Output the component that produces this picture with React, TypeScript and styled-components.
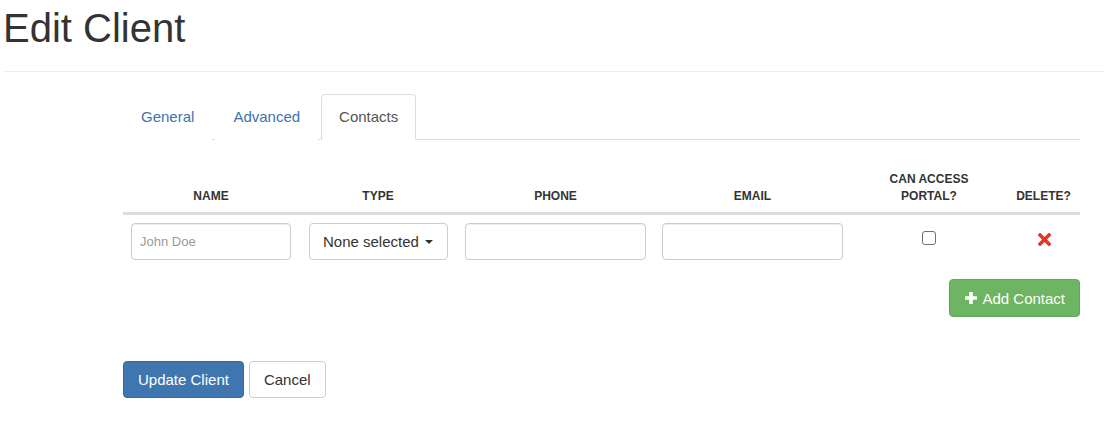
import React from "react";
import styled, { createGlobalStyle } from "styled-components";

const GlobalStyle = createGlobalStyle`
  html, body { margin: 0; padding: 0; background: #fff; }
  body {
    font-family: "Liberation Sans", Arial, Helvetica, sans-serif;
    font-size: 15px;
    color: #333;
  }
  * { box-sizing: border-box; }
`;

const Page = styled.div`
  width: 1104px;
  padding-top: 6px;
`;

const Title = styled.h1`
  margin: 0 0 0 3px;
  font-size: 40px;
  line-height: 44px;
  font-weight: 400;
  color: #333;
`;

const Rule = styled.hr`
  margin: 21px 0 0 3px;
  border: 0;
  border-top: 1px solid #eee;
`;

const Content = styled.div`
  width: 957px;
  margin: 22px 0 0 123px;
`;

const Tabs = styled.ul`
  display: flex;
  list-style: none;
  margin: 0;
  padding: 0;
  border-bottom: 1px solid #ddd;
`;

const TabItem = styled.li`
  margin: 0 3px -1px 0;
`;

const TabLink = styled.a<{ $active?: boolean }>`
  display: block;
  padding: 11px 17px 12px;
  line-height: 21px;
  font-size: 15px;
  border: 1px solid ${(p) => (p.$active ? "#ddd" : "transparent")};
  border-bottom-color: ${(p) => (p.$active ? "#fff" : "transparent")};
  border-radius: 4px 4px 0 0;
  background: #fff;
  color: ${(p) => (p.$active ? "#555" : "#3a74b0")};
  text-decoration: none;
  cursor: pointer;
`;

const COLS = "176px 158px 197px 197px 156px 73px";

const HeadRow = styled.div`
  display: grid;
  grid-template-columns: ${COLS};
  margin-top: 23px;
  border-bottom: 3px solid #ddd;
`;

const HeadCell = styled.div`
  align-self: end;
  padding: 8px 8px 7px;
  text-align: center;
  font-weight: 700;
  font-size: 12px;
  line-height: 17px;
  text-transform: uppercase;
  color: #333;
`;

const BodyRow = styled.div`
  display: grid;
  grid-template-columns: ${COLS};
`;

const Cell = styled.div<{ $center?: boolean }>`
  padding: 8px;
  display: flex;
  justify-content: ${(p) => (p.$center ? "center" : "flex-start")};
  align-items: flex-start;
`;

const TextInput = styled.input`
  width: 100%;
  height: 37px;
  padding: 6px 8px;
  font-family: "Liberation Sans", Arial, sans-serif;
  font-size: 13px;
  color: #555;
  border: 1px solid #ccc;
  border-radius: 4px;
  box-shadow: inset 0 1px 1px rgba(0, 0, 0, 0.075);
  outline: none;
  &::placeholder { color: #999; }
`;

const SelectButton = styled.button`
  height: 37px;
  margin-left: 2px;
  padding: 0 14px 0 13px;
  display: flex;
  align-items: center;
  font-family: "Liberation Sans", Arial, sans-serif;
  font-size: 15px;
  color: #333;
  background: #fff;
  border: 1px solid #ccc;
  border-radius: 4px;
`;

const Caret = styled.span`
  display: inline-block;
  width: 0;
  height: 0;
  margin-left: 6px;
  margin-top: 1px;
  border-top: 4px solid #333;
  border-left: 4px solid transparent;
  border-right: 4px solid transparent;
`;

const Check = styled.input`
  appearance: none;
  width: 14px;
  height: 14px;
  margin: 8px 0 0 0;
  border: 1px solid #6f6f6f;
  border-radius: 3px;
  background: #fff;
`;

const DeleteIcon = styled.svg`
  margin-top: 10px;
  margin-left: 1px;
`;

const AddRow = styled.div`
  display: flex;
  justify-content: flex-end;
  margin-top: 11px;
`;

const Button = styled.button<{ $variant?: "primary" | "success" | "default" }>`
  display: inline-flex;
  align-items: center;
  gap: 4px;
  height: ${(p) => (p.$variant === "success" ? "38px" : "37px")};
  padding: 0 14px;
  font-family: "Liberation Sans", Arial, sans-serif;
  font-size: 15px;
  border-radius: 4px;
  border: 1px solid
    ${(p) =>
      p.$variant === "primary" ? "#34689f" : p.$variant === "success" ? "#63a95a" : "#ccc"};
  background: ${(p) =>
    p.$variant === "primary" ? "#3f76b0" : p.$variant === "success" ? "#6db463" : "#fff"};
  color: ${(p) => (p.$variant === "default" ? "#333" : "#fff")};
  cursor: pointer;
`;

const Actions = styled.div`
  display: flex;
  gap: 5px;
  margin-top: 44px;
`;

export default function App() {
  return (
    <>
      <GlobalStyle />
      <Page>
        <Title>Edit Client</Title>
        <Rule />
        <Content>
          <Tabs>
            <TabItem><TabLink>General</TabLink></TabItem>
            <TabItem><TabLink>Advanced</TabLink></TabItem>
            <TabItem><TabLink $active>Contacts</TabLink></TabItem>
          </Tabs>

          <HeadRow>
            <HeadCell>Name</HeadCell>
            <HeadCell>Type</HeadCell>
            <HeadCell>Phone</HeadCell>
            <HeadCell>Email</HeadCell>
            <HeadCell>Can access<br />portal?</HeadCell>
            <HeadCell>Delete?</HeadCell>
          </HeadRow>
          <BodyRow>
            <Cell><TextInput placeholder="John Doe" /></Cell>
            <Cell>
              <SelectButton>None selected<Caret /></SelectButton>
            </Cell>
            <Cell><TextInput /></Cell>
            <Cell><TextInput /></Cell>
            <Cell $center><Check type="checkbox" /></Cell>
            <Cell $center>
              <DeleteIcon width="13" height="13" viewBox="0 0 13 13">
                <path d="M2 2 L11 11 M11 2 L2 11" stroke="#e8352b" strokeWidth="3.6" strokeLinecap="square" />
              </DeleteIcon>
            </Cell>
          </BodyRow>

          <AddRow>
            <Button $variant="success">
              <svg width="14" height="14" viewBox="0 0 14 14">
                <path d="M7 1 V13 M1 7 H13" stroke="#fff" strokeWidth="3.6" />
              </svg>
              Add Contact
            </Button>
          </AddRow>

          <Actions>
            <Button $variant="primary">Update Client</Button>
            <Button $variant="default">Cancel</Button>
          </Actions>
        </Content>
      </Page>
    </>
  );
}
